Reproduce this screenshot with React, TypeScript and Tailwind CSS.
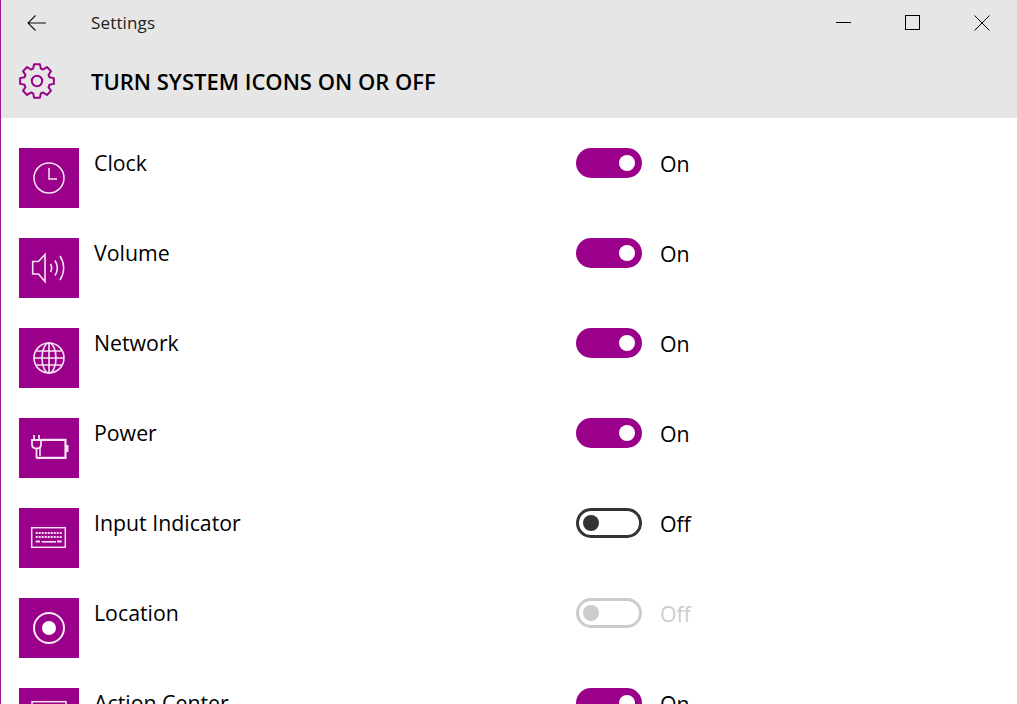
const P = "bg-[#9a0089]";
const LINE = "#f5e3f3";

function Clock() {
  return (
    <svg width="60" height="60" viewBox="0 0 60 60" fill="none" stroke={LINE} strokeWidth="1.5">
      <circle cx="30" cy="30" r="15" />
      <path d="M30 20V31H38" />
    </svg>
  );
}
function Volume() {
  return (
    <svg width="60" height="60" viewBox="0 0 60 60" fill="none" stroke={LINE} strokeWidth="1.6">
      <path d="M13.7 23.5H19.5L26 16.5V43.5L19.5 36H13.7Z" />
      <path d="M31.5 26C32.9 28.5 32.9 31.5 31.5 34" />
      <path d="M36 22.5C38.8 27 38.8 33 36 37.5" />
      <path d="M41 18C45.8 25.5 45.8 34.5 41 42" />
    </svg>
  );
}
function Globe() {
  return (
    <svg width="60" height="60" viewBox="0 0 60 60" fill="none" stroke={LINE} strokeWidth="1.6">
      <circle cx="30" cy="30" r="15" />
      <ellipse cx="30" cy="30" rx="7" ry="15" />
      <path d="M30 15V45M15 30H45M17.5 23H42.5M17.5 37H42.5" />
    </svg>
  );
}
function Power() {
  return (
    <svg width="60" height="60" viewBox="0 0 60 60" fill="none" stroke={LINE} strokeWidth="1.8">
      <path d="M13 22H22V26.5C22 29 20 30.5 17.5 30.5C15 30.5 13 29 13 26.5Z" />
      <path d="M15 22V17M20 22V17M17.5 30.5V40.5" />
      <path d="M22 21.8H46.5V39.8H17.5" strokeWidth="2.2" />
      <path d="M21 38L21 29" strokeWidth="1.6" />
      <path d="M47 28H48.6V33H47" fill={LINE} />
    </svg>
  );
}
function Keyboard() {
  const dots: React.ReactElement[] = [];
  for (let i = 0; i < 9; i++) {
    dots.push(<rect key={"a" + i} x={16.7 + i * 3} y="24" width="2" height="2" />);
    if (i > 0 && i < 8) dots.push(<rect key={"b" + i} x={16.7 + i * 3} y="28" width="2" height="2" />);
  }
  return (
    <svg width="60" height="60" viewBox="0 0 60 60" fill={LINE}>
      <rect x="12.7" y="19.7" width="33.6" height="19.6" fill="none" stroke={LINE} strokeWidth="1.5" />
      {dots}
      <rect x="16.7" y="28" width="2" height="2" />
      <rect x="40.7" y="28" width="2" height="2" />
      <rect x="16.7" y="32.5" width="4.3" height="2" />
      <rect x="22.7" y="33" width="14.3" height="1.6" />
      <rect x="38" y="32.5" width="4.7" height="2" />
    </svg>
  );
}
function Location() {
  return (
    <svg width="60" height="60" viewBox="0 0 60 60" fill="none" stroke="#f9edf7" strokeWidth="2">
      <circle cx="30" cy="30" r="15" />
      <circle cx="30" cy="30" r="7" fill="#ffffff" stroke="none" />
    </svg>
  );
}
function Action() {
  return (
    <svg width="60" height="60" viewBox="0 0 60 60" fill="none" stroke={LINE} strokeWidth="1.5">
      <rect x="13" y="13.7" width="34" height="26" />
    </svg>
  );
}

function gearPath() {
  const pts: string[] = [];
  const c = 18;
  for (let k = 0; k < 8; k++) {
    const a = (k * Math.PI) / 4 - Math.PI / 2;
    const add = (r: number, d: number) => {
      const x = c + r * Math.cos(a + d);
      const y = c + r * Math.sin(a + d);
      pts.push(`${x.toFixed(2)} ${y.toFixed(2)}`);
    };
    add(13, -0.3);
    add(17.1, -0.17);
    add(17.1, 0.17);
    add(13, 0.3);
  }
  return "M" + pts.join("L") + "Z";
}

function Toggle({ state }: { state: "on" | "off" | "disabled" }) {
  if (state === "on") {
    return (
      <div className={`flex h-[30px] w-[66px] items-center justify-end rounded-full pr-[7px] ${P}`}>
        <div className="h-4 w-4 rounded-full bg-white" />
      </div>
    );
  }
  const off = state === "off";
  return (
    <div
      className={`flex h-[30px] w-[66px] items-center rounded-full border-[3px] pl-[4px] ${
        off ? "border-[#333333]" : "border-[#cccccc]"
      }`}
    >
      <div className={`h-4 w-4 rounded-full ${off ? "bg-[#333333]" : "bg-[#cccccc]"}`} />
    </div>
  );
}

const rows = [
  { name: "Clock", Icon: Clock, state: "on" as const },
  { name: "Volume", Icon: Volume, state: "on" as const },
  { name: "Network", Icon: Globe, state: "on" as const },
  { name: "Power", Icon: Power, state: "on" as const },
  { name: "Input Indicator", Icon: Keyboard, state: "off" as const },
  { name: "Location", Icon: Location, state: "disabled" as const },
  { name: "Action Center", Icon: Action, state: "on" as const },
];

export default function App() {
  return (
    <div className="h-[704px] w-[1017px] overflow-hidden border-l border-[#a5149a] bg-white font-['Open_Sans',sans-serif] text-black">
      <header className="h-[118px] bg-[#e6e6e6]">
        <div className="flex h-[45px] items-center">
          <div className="flex w-[90px] pl-[26px]">
            <svg width="20" height="16" viewBox="0 0 20 16" fill="none" stroke="#111" strokeWidth="1.1">
              <path d="M8.5 .5L1 8L8.5 15.5M1 8H19" />
            </svg>
          </div>
          <span className="text-[17px] tracking-[0.15px] text-[#222222]">Settings</span>
          <div className="ml-auto flex items-center">
            <svg className="mr-[54px]" width="15" height="15" viewBox="0 0 15 15" stroke="#000" strokeWidth="1" fill="none">
              <path d="M0 7.5H15" />
            </svg>
            <svg className="mr-[54px]" width="15" height="15" viewBox="0 0 15 15" stroke="#000" strokeWidth="1" fill="none">
              <rect x=".5" y=".5" width="14" height="14" />
            </svg>
            <svg className="mr-[27px]" width="16" height="16" viewBox="0 0 16 16" stroke="#000" strokeWidth="1" fill="none">
              <path d="M.5 .5L15.5 15.5M15.5 .5L.5 15.5" />
            </svg>
          </div>
        </div>
        <div className="flex h-[73px] items-center">
          <div className="flex w-[90px] pb-[2px] pl-[18px]">
            <svg width="36" height="36" viewBox="0 0 36 36" fill="none" stroke="#9a0089" strokeWidth="2" strokeLinejoin="round">
              <circle cx="18" cy="18" r="5.2" />
              <path d={gearPath()} />
            </svg>
          </div>
          <h1 className="text-[22px] font-semibold">TURN SYSTEM ICONS ON OR OFF</h1>
        </div>
      </header>
      <main className="pl-[18px] pt-[30px]">
        {rows.map(({ name, Icon, state }) => (
          <div key={name} className="flex h-[90px] items-start">
            <div className={`h-[60px] w-[60px] shrink-0 ${P}`}>
              <Icon />
            </div>
            <div className="w-[497px] pl-[15px] text-[21.3px] leading-[30px]">{name}</div>
            <Toggle state={state} />
            <span
              className={`ml-[18px] text-[21.3px] leading-[32px] ${state === "disabled" ? "text-[#cccccc]" : ""}`}
            >
              {state === "on" ? "On" : "Off"}
            </span>
          </div>
        ))}
      </main>
    </div>
  );
}
